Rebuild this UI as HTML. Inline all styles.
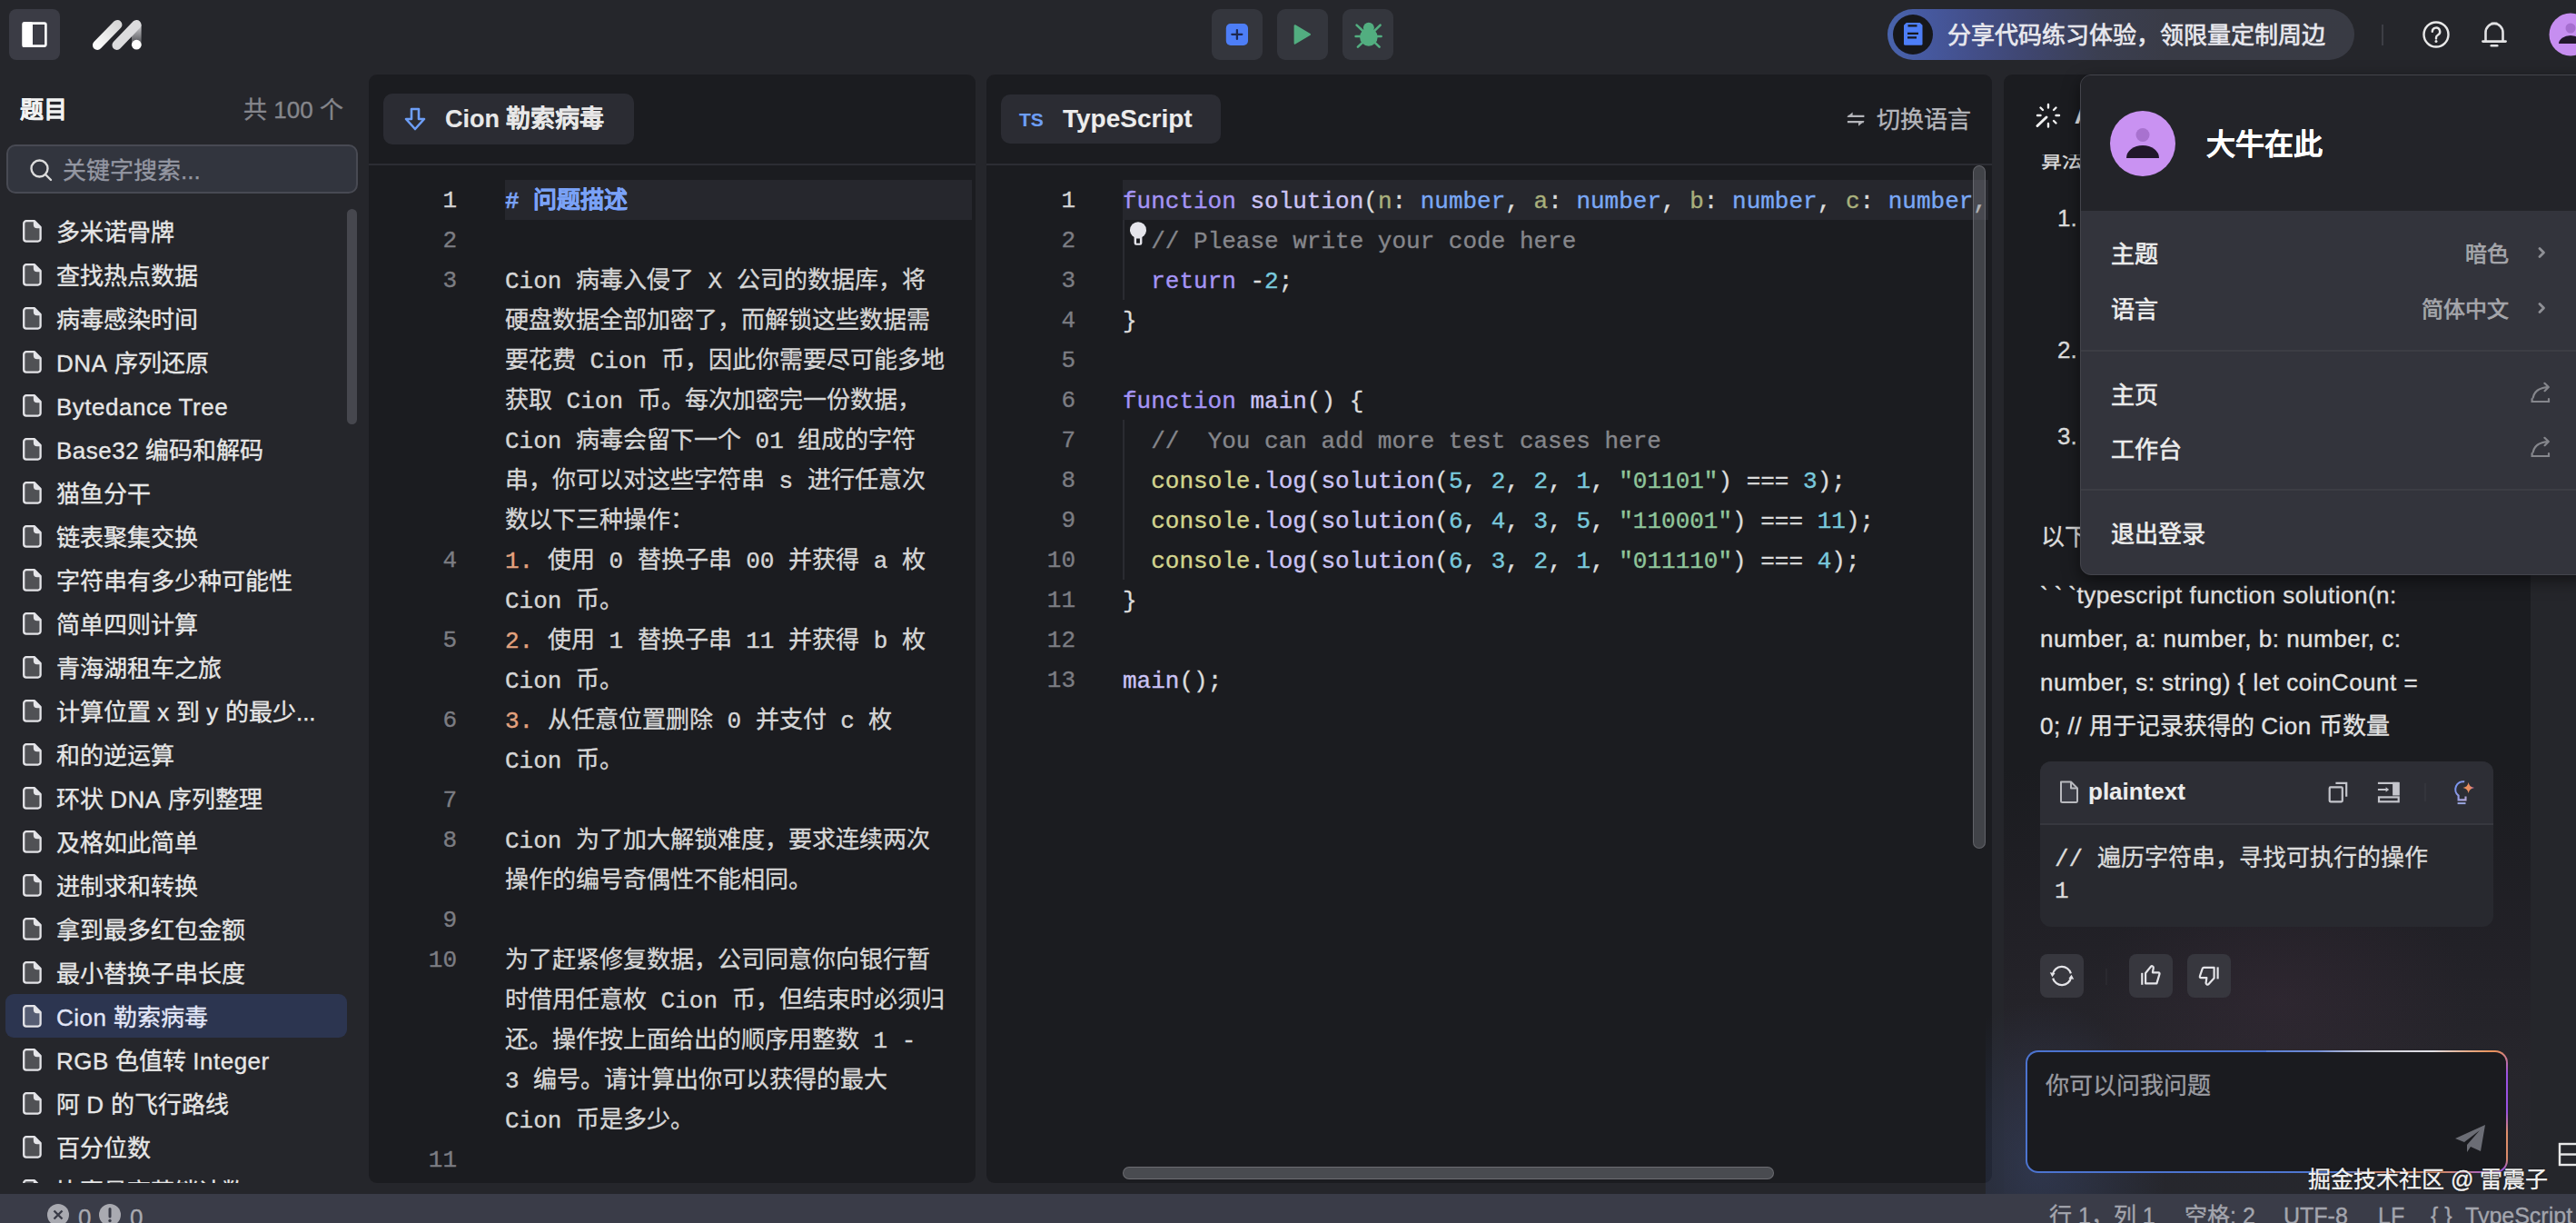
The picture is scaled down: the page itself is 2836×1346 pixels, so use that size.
<!DOCTYPE html>
<html lang="zh-CN"><head><meta charset="utf-8"><title>MarsCode</title>
<style>
html,body{margin:0;padding:0;width:2836px;height:1346px;overflow:hidden;background:#25262b}
.b{position:absolute}
.t{position:absolute;white-space:pre;-webkit-text-stroke:0.35px currentColor}
svg.b{overflow:visible}
</style></head><body>
<div class="b" style="left:0px;top:0px;width:2836px;height:1346px;background:#25262b"></div>
<div class="b" style="left:10px;top:10px;width:56px;height:56px;background:#3b3c45;border-radius:8px"></div>
<svg class="b" style="left:10px;top:10px" width="56" height="56" viewBox="0 0 56 56">
<rect x="15.8" y="15.6" width="24.6" height="25" rx="1.5" fill="none" stroke="#ffffff" stroke-width="2.6"/>
<rect x="14.5" y="14.3" width="11.5" height="27.6" rx="1.5" fill="#ffffff"/></svg>
<svg class="b" style="left:90px;top:10px" width="80" height="60" viewBox="90 10 80 60">
<defs><linearGradient id="lg1" x1="0" y1="1" x2="1" y2="0"><stop offset="0" stop-color="#fafafa"/><stop offset="1" stop-color="#d8d8d8"/></linearGradient>
<linearGradient id="lg2" x1="0" y1="0" x2="0" y2="1"><stop offset="0" stop-color="#cfcfd2"/><stop offset="1" stop-color="#4a4b50"/></linearGradient></defs>
<line x1="107.2" y1="49.7" x2="129.2" y2="27.2" stroke="url(#lg1)" stroke-width="10.5" stroke-linecap="round"/>
<path d="M145 27.2 L155.6 27.2 L155.6 49 L145 49 Z" fill="url(#lg2)"/>
<line x1="128.7" y1="49.7" x2="150.3" y2="27.2" stroke="#dcdcde" stroke-width="10.5" stroke-linecap="round"/>
<circle cx="150.3" cy="49.2" r="5.4" fill="#ffffff"/></svg>
<div class="b" style="left:1334px;top:10px;width:56px;height:56px;background:#34363d;border-radius:9px"></div>
<div class="b" style="left:1406px;top:10px;width:56px;height:56px;background:#34363d;border-radius:9px"></div>
<div class="b" style="left:1478px;top:10px;width:56px;height:56px;background:#34363d;border-radius:9px"></div>
<svg class="b" style="left:1334px;top:10px" width="55" height="55" viewBox="0 0 55 55">
<rect x="15.8" y="16.1" width="24.2" height="23.8" rx="5" fill="#4d7ef7"/>
<path d="M27.9 23.1 V32.9 M22.3 27.8 H33.3" stroke="#1d2850" stroke-width="2.3" stroke-linecap="round"/></svg>
<svg class="b" style="left:1406px;top:10px" width="55" height="55" viewBox="0 0 55 55">
<path d="M19.6 18.2 L36 27.8 L19.6 37.7 Z" fill="#52ae80" stroke="#52ae80" stroke-width="2" stroke-linejoin="round"/></svg>
<svg class="b" style="left:1478px;top:10px" width="55" height="55" viewBox="0 0 55 55">
<g stroke="#52ae80" stroke-width="2.6" stroke-linecap="round" fill="none">
<path d="M15.6 17.6 L21.9 23.5"/><path d="M41.6 17.6 L35.6 23.5"/>
<path d="M14.6 30 L19.8 30"/><path d="M42.6 30 L37.6 30"/>
<path d="M16.9 41.6 L22.3 36.6"/><path d="M40.6 41.6 L35.4 36.6"/></g>
<ellipse cx="28.85" cy="20.6" rx="6" ry="5.9" fill="#52ae80"/>
<ellipse cx="28.85" cy="30.8" rx="9.8" ry="10" fill="#52ae80"/></svg>
<div class="b" style="left:2078px;top:10px;width:514px;height:56px;border-radius:28px;background:linear-gradient(90deg,#4964ad 0%,#4659a0 8%,#434f8a 18%,#3f4670 30%,#3b3f52 45%,#393b46 60%,#393b44 100%)"></div>
<div class="b" style="left:2084px;top:16px;width:44px;height:44px;border-radius:22px;background:#16171b"></div>
<svg class="b" style="left:2084px;top:16px" width="44" height="44" viewBox="0 0 44 44">
<path d="M12 11.8 l2.8 -2.8 h14.9 l2.8 2.8 v20.4 a1.5 1.5 0 0 1 -1.5 1.5 h-17.5 a1.5 1.5 0 0 1 -1.5 -1.5 z" fill="#4d7ef7"/>
<path d="M16.5 12.4 h10 M16 20.8 h12 M16 25.4 h10" stroke="#16171b" stroke-width="2.2"/></svg>
<div class="t" style="left:2144px;top:26.0px;font-size:26px;line-height:26px;color:#e8e8ee;font-weight:normal;font-family:'Liberation Sans', sans-serif;-webkit-text-stroke:0.7px currentColor;">分享代码练习体验，领限量定制周边</div>
<div class="b" style="left:2622px;top:27px;width:2px;height:23px;background:#3d3e45"></div>
<svg class="b" style="left:2664px;top:20px" width="36" height="36" viewBox="0 0 36 36">
<circle cx="18" cy="18" r="13.5" fill="none" stroke="#e8e8e8" stroke-width="2.4"/>
<path d="M13.8 14.8 a4.2 4.2 0 1 1 6.2 3.7 c-1.3 0.7 -2 1.4 -2 2.9 v1" fill="none" stroke="#e8e8e8" stroke-width="2.4" stroke-linecap="round"/>
<circle cx="18" cy="25.6" r="1.5" fill="#e8e8e8"/></svg>
<svg class="b" style="left:2728px;top:20px" width="36" height="36" viewBox="0 0 36 36">
<path d="M8.5 25.4 V15.8 A9.5 9.8 0 0 1 27.5 15.8 V25.4" fill="none" stroke="#e2e2e4" stroke-width="2.6"/>
<path d="M5.5 25.6 h25" stroke="#e2e2e4" stroke-width="2.8" stroke-linecap="round"/>
<path d="M15.5 5.6 h5" stroke="#e2e2e4" stroke-width="2.4" stroke-linecap="round"/>
<path d="M14.8 30.2 h6.4" stroke="#e2e2e4" stroke-width="2.6" stroke-linecap="round"/></svg>
<svg class="b" style="left:2806px;top:14px" width="48" height="48" viewBox="0 0 48 48">
<circle cx="24" cy="24" r="23.5" fill="#c68ef0"/>
<circle cx="24" cy="17" r="5.5" fill="#a66fd0"/>
<path d="M11 34 a13 9 0 0 1 26 0 z" fill="#22182b"/></svg>
<div class="t" style="left:22px;top:108.0px;font-size:26px;line-height:26px;color:#f2f2f2;font-weight:bold;font-family:'Liberation Sans', sans-serif;-webkit-text-stroke:0.1px currentColor;">题目</div>
<div class="t" style="left:268px;top:108.0px;font-size:26px;line-height:26px;color:#85868c;font-weight:normal;font-family:'Liberation Sans', sans-serif;">共 100 个</div>
<div class="b" style="left:7px;top:159px;width:387px;height:54px;background:#32353e;border:2px solid #484a53;border-radius:10px;box-sizing:border-box"></div>
<svg class="b" style="left:30px;top:172px" width="30" height="30" viewBox="0 0 30 30">
<circle cx="13.5" cy="13.5" r="9" fill="none" stroke="#dcdcdc" stroke-width="2.4"/>
<path d="M20.5 20.5 L26 26" stroke="#dcdcdc" stroke-width="2.4" stroke-linecap="round"/></svg>
<div class="t" style="left:69px;top:174.5px;font-size:26px;line-height:26px;color:#9497a2;font-weight:normal;font-family:'Liberation Sans', sans-serif;">关键字搜索...</div>
<div class="b" style="left:0;top:222px;width:400px;height:1080px;overflow:hidden">
<svg class="b" style="left:22px;top:18px" width="28" height="28" viewBox="0 0 28 28">
<path d="M7 3.2 h9 l6.6 6.8 v12.8 a2.8 2.8 0 0 1 -2.8 2.8 h-12.8 a2.8 2.8 0 0 1 -2.8 -2.8 v-16.8 a2.8 2.8 0 0 1 2.8 -2.8 z" fill="rgba(255,255,255,0.2)" stroke="#e4e4e8" stroke-width="2.3" stroke-linejoin="round"/>
<path d="M16 3.2 v4 a2.8 2.8 0 0 0 2.8 2.8 h3.8" fill="#e4e4e8" stroke="#e4e4e8" stroke-width="2.3" stroke-linejoin="round"/></svg>
<div class="t" style="left:62px;top:20.5px;font-size:26px;line-height:26px;color:#e6e6e6;font-family:'Liberation Sans', sans-serif">多米诺骨牌</div>
<svg class="b" style="left:22px;top:66px" width="28" height="28" viewBox="0 0 28 28">
<path d="M7 3.2 h9 l6.6 6.8 v12.8 a2.8 2.8 0 0 1 -2.8 2.8 h-12.8 a2.8 2.8 0 0 1 -2.8 -2.8 v-16.8 a2.8 2.8 0 0 1 2.8 -2.8 z" fill="rgba(255,255,255,0.2)" stroke="#e4e4e8" stroke-width="2.3" stroke-linejoin="round"/>
<path d="M16 3.2 v4 a2.8 2.8 0 0 0 2.8 2.8 h3.8" fill="#e4e4e8" stroke="#e4e4e8" stroke-width="2.3" stroke-linejoin="round"/></svg>
<div class="t" style="left:62px;top:68.5px;font-size:26px;line-height:26px;color:#e6e6e6;font-family:'Liberation Sans', sans-serif">查找热点数据</div>
<svg class="b" style="left:22px;top:114px" width="28" height="28" viewBox="0 0 28 28">
<path d="M7 3.2 h9 l6.6 6.8 v12.8 a2.8 2.8 0 0 1 -2.8 2.8 h-12.8 a2.8 2.8 0 0 1 -2.8 -2.8 v-16.8 a2.8 2.8 0 0 1 2.8 -2.8 z" fill="rgba(255,255,255,0.2)" stroke="#e4e4e8" stroke-width="2.3" stroke-linejoin="round"/>
<path d="M16 3.2 v4 a2.8 2.8 0 0 0 2.8 2.8 h3.8" fill="#e4e4e8" stroke="#e4e4e8" stroke-width="2.3" stroke-linejoin="round"/></svg>
<div class="t" style="left:62px;top:116.5px;font-size:26px;line-height:26px;color:#e6e6e6;font-family:'Liberation Sans', sans-serif">病毒感染时间</div>
<svg class="b" style="left:22px;top:162px" width="28" height="28" viewBox="0 0 28 28">
<path d="M7 3.2 h9 l6.6 6.8 v12.8 a2.8 2.8 0 0 1 -2.8 2.8 h-12.8 a2.8 2.8 0 0 1 -2.8 -2.8 v-16.8 a2.8 2.8 0 0 1 2.8 -2.8 z" fill="rgba(255,255,255,0.2)" stroke="#e4e4e8" stroke-width="2.3" stroke-linejoin="round"/>
<path d="M16 3.2 v4 a2.8 2.8 0 0 0 2.8 2.8 h3.8" fill="#e4e4e8" stroke="#e4e4e8" stroke-width="2.3" stroke-linejoin="round"/></svg>
<div class="t" style="left:62px;top:164.5px;font-size:26px;line-height:26px;color:#e6e6e6;font-family:'Liberation Sans', sans-serif"><span style="letter-spacing:0.5px">DNA</span> 序列还原</div>
<svg class="b" style="left:22px;top:210px" width="28" height="28" viewBox="0 0 28 28">
<path d="M7 3.2 h9 l6.6 6.8 v12.8 a2.8 2.8 0 0 1 -2.8 2.8 h-12.8 a2.8 2.8 0 0 1 -2.8 -2.8 v-16.8 a2.8 2.8 0 0 1 2.8 -2.8 z" fill="rgba(255,255,255,0.2)" stroke="#e4e4e8" stroke-width="2.3" stroke-linejoin="round"/>
<path d="M16 3.2 v4 a2.8 2.8 0 0 0 2.8 2.8 h3.8" fill="#e4e4e8" stroke="#e4e4e8" stroke-width="2.3" stroke-linejoin="round"/></svg>
<div class="t" style="left:62px;top:212.5px;font-size:26px;line-height:26px;color:#e6e6e6;font-family:'Liberation Sans', sans-serif"><span style="letter-spacing:0.5px">Bytedance Tree</span></div>
<svg class="b" style="left:22px;top:258px" width="28" height="28" viewBox="0 0 28 28">
<path d="M7 3.2 h9 l6.6 6.8 v12.8 a2.8 2.8 0 0 1 -2.8 2.8 h-12.8 a2.8 2.8 0 0 1 -2.8 -2.8 v-16.8 a2.8 2.8 0 0 1 2.8 -2.8 z" fill="rgba(255,255,255,0.2)" stroke="#e4e4e8" stroke-width="2.3" stroke-linejoin="round"/>
<path d="M16 3.2 v4 a2.8 2.8 0 0 0 2.8 2.8 h3.8" fill="#e4e4e8" stroke="#e4e4e8" stroke-width="2.3" stroke-linejoin="round"/></svg>
<div class="t" style="left:62px;top:260.5px;font-size:26px;line-height:26px;color:#e6e6e6;font-family:'Liberation Sans', sans-serif"><span style="letter-spacing:0.5px">Base32</span> 编码和解码</div>
<svg class="b" style="left:22px;top:306px" width="28" height="28" viewBox="0 0 28 28">
<path d="M7 3.2 h9 l6.6 6.8 v12.8 a2.8 2.8 0 0 1 -2.8 2.8 h-12.8 a2.8 2.8 0 0 1 -2.8 -2.8 v-16.8 a2.8 2.8 0 0 1 2.8 -2.8 z" fill="rgba(255,255,255,0.2)" stroke="#e4e4e8" stroke-width="2.3" stroke-linejoin="round"/>
<path d="M16 3.2 v4 a2.8 2.8 0 0 0 2.8 2.8 h3.8" fill="#e4e4e8" stroke="#e4e4e8" stroke-width="2.3" stroke-linejoin="round"/></svg>
<div class="t" style="left:62px;top:308.5px;font-size:26px;line-height:26px;color:#e6e6e6;font-family:'Liberation Sans', sans-serif">猫鱼分干</div>
<svg class="b" style="left:22px;top:354px" width="28" height="28" viewBox="0 0 28 28">
<path d="M7 3.2 h9 l6.6 6.8 v12.8 a2.8 2.8 0 0 1 -2.8 2.8 h-12.8 a2.8 2.8 0 0 1 -2.8 -2.8 v-16.8 a2.8 2.8 0 0 1 2.8 -2.8 z" fill="rgba(255,255,255,0.2)" stroke="#e4e4e8" stroke-width="2.3" stroke-linejoin="round"/>
<path d="M16 3.2 v4 a2.8 2.8 0 0 0 2.8 2.8 h3.8" fill="#e4e4e8" stroke="#e4e4e8" stroke-width="2.3" stroke-linejoin="round"/></svg>
<div class="t" style="left:62px;top:356.5px;font-size:26px;line-height:26px;color:#e6e6e6;font-family:'Liberation Sans', sans-serif">链表聚集交换</div>
<svg class="b" style="left:22px;top:402px" width="28" height="28" viewBox="0 0 28 28">
<path d="M7 3.2 h9 l6.6 6.8 v12.8 a2.8 2.8 0 0 1 -2.8 2.8 h-12.8 a2.8 2.8 0 0 1 -2.8 -2.8 v-16.8 a2.8 2.8 0 0 1 2.8 -2.8 z" fill="rgba(255,255,255,0.2)" stroke="#e4e4e8" stroke-width="2.3" stroke-linejoin="round"/>
<path d="M16 3.2 v4 a2.8 2.8 0 0 0 2.8 2.8 h3.8" fill="#e4e4e8" stroke="#e4e4e8" stroke-width="2.3" stroke-linejoin="round"/></svg>
<div class="t" style="left:62px;top:404.5px;font-size:26px;line-height:26px;color:#e6e6e6;font-family:'Liberation Sans', sans-serif">字符串有多少种可能性</div>
<svg class="b" style="left:22px;top:450px" width="28" height="28" viewBox="0 0 28 28">
<path d="M7 3.2 h9 l6.6 6.8 v12.8 a2.8 2.8 0 0 1 -2.8 2.8 h-12.8 a2.8 2.8 0 0 1 -2.8 -2.8 v-16.8 a2.8 2.8 0 0 1 2.8 -2.8 z" fill="rgba(255,255,255,0.2)" stroke="#e4e4e8" stroke-width="2.3" stroke-linejoin="round"/>
<path d="M16 3.2 v4 a2.8 2.8 0 0 0 2.8 2.8 h3.8" fill="#e4e4e8" stroke="#e4e4e8" stroke-width="2.3" stroke-linejoin="round"/></svg>
<div class="t" style="left:62px;top:452.5px;font-size:26px;line-height:26px;color:#e6e6e6;font-family:'Liberation Sans', sans-serif">简单四则计算</div>
<svg class="b" style="left:22px;top:498px" width="28" height="28" viewBox="0 0 28 28">
<path d="M7 3.2 h9 l6.6 6.8 v12.8 a2.8 2.8 0 0 1 -2.8 2.8 h-12.8 a2.8 2.8 0 0 1 -2.8 -2.8 v-16.8 a2.8 2.8 0 0 1 2.8 -2.8 z" fill="rgba(255,255,255,0.2)" stroke="#e4e4e8" stroke-width="2.3" stroke-linejoin="round"/>
<path d="M16 3.2 v4 a2.8 2.8 0 0 0 2.8 2.8 h3.8" fill="#e4e4e8" stroke="#e4e4e8" stroke-width="2.3" stroke-linejoin="round"/></svg>
<div class="t" style="left:62px;top:500.5px;font-size:26px;line-height:26px;color:#e6e6e6;font-family:'Liberation Sans', sans-serif">青海湖租车之旅</div>
<svg class="b" style="left:22px;top:546px" width="28" height="28" viewBox="0 0 28 28">
<path d="M7 3.2 h9 l6.6 6.8 v12.8 a2.8 2.8 0 0 1 -2.8 2.8 h-12.8 a2.8 2.8 0 0 1 -2.8 -2.8 v-16.8 a2.8 2.8 0 0 1 2.8 -2.8 z" fill="rgba(255,255,255,0.2)" stroke="#e4e4e8" stroke-width="2.3" stroke-linejoin="round"/>
<path d="M16 3.2 v4 a2.8 2.8 0 0 0 2.8 2.8 h3.8" fill="#e4e4e8" stroke="#e4e4e8" stroke-width="2.3" stroke-linejoin="round"/></svg>
<div class="t" style="left:62px;top:548.5px;font-size:26px;line-height:26px;color:#e6e6e6;font-family:'Liberation Sans', sans-serif">计算位置 <span style="letter-spacing:0.5px">x</span> 到 <span style="letter-spacing:0.5px">y</span> 的最少...</div>
<svg class="b" style="left:22px;top:594px" width="28" height="28" viewBox="0 0 28 28">
<path d="M7 3.2 h9 l6.6 6.8 v12.8 a2.8 2.8 0 0 1 -2.8 2.8 h-12.8 a2.8 2.8 0 0 1 -2.8 -2.8 v-16.8 a2.8 2.8 0 0 1 2.8 -2.8 z" fill="rgba(255,255,255,0.2)" stroke="#e4e4e8" stroke-width="2.3" stroke-linejoin="round"/>
<path d="M16 3.2 v4 a2.8 2.8 0 0 0 2.8 2.8 h3.8" fill="#e4e4e8" stroke="#e4e4e8" stroke-width="2.3" stroke-linejoin="round"/></svg>
<div class="t" style="left:62px;top:596.5px;font-size:26px;line-height:26px;color:#e6e6e6;font-family:'Liberation Sans', sans-serif">和的逆运算</div>
<svg class="b" style="left:22px;top:642px" width="28" height="28" viewBox="0 0 28 28">
<path d="M7 3.2 h9 l6.6 6.8 v12.8 a2.8 2.8 0 0 1 -2.8 2.8 h-12.8 a2.8 2.8 0 0 1 -2.8 -2.8 v-16.8 a2.8 2.8 0 0 1 2.8 -2.8 z" fill="rgba(255,255,255,0.2)" stroke="#e4e4e8" stroke-width="2.3" stroke-linejoin="round"/>
<path d="M16 3.2 v4 a2.8 2.8 0 0 0 2.8 2.8 h3.8" fill="#e4e4e8" stroke="#e4e4e8" stroke-width="2.3" stroke-linejoin="round"/></svg>
<div class="t" style="left:62px;top:644.5px;font-size:26px;line-height:26px;color:#e6e6e6;font-family:'Liberation Sans', sans-serif">环状 <span style="letter-spacing:0.5px">DNA</span> 序列整理</div>
<svg class="b" style="left:22px;top:690px" width="28" height="28" viewBox="0 0 28 28">
<path d="M7 3.2 h9 l6.6 6.8 v12.8 a2.8 2.8 0 0 1 -2.8 2.8 h-12.8 a2.8 2.8 0 0 1 -2.8 -2.8 v-16.8 a2.8 2.8 0 0 1 2.8 -2.8 z" fill="rgba(255,255,255,0.2)" stroke="#e4e4e8" stroke-width="2.3" stroke-linejoin="round"/>
<path d="M16 3.2 v4 a2.8 2.8 0 0 0 2.8 2.8 h3.8" fill="#e4e4e8" stroke="#e4e4e8" stroke-width="2.3" stroke-linejoin="round"/></svg>
<div class="t" style="left:62px;top:692.5px;font-size:26px;line-height:26px;color:#e6e6e6;font-family:'Liberation Sans', sans-serif">及格如此简单</div>
<svg class="b" style="left:22px;top:738px" width="28" height="28" viewBox="0 0 28 28">
<path d="M7 3.2 h9 l6.6 6.8 v12.8 a2.8 2.8 0 0 1 -2.8 2.8 h-12.8 a2.8 2.8 0 0 1 -2.8 -2.8 v-16.8 a2.8 2.8 0 0 1 2.8 -2.8 z" fill="rgba(255,255,255,0.2)" stroke="#e4e4e8" stroke-width="2.3" stroke-linejoin="round"/>
<path d="M16 3.2 v4 a2.8 2.8 0 0 0 2.8 2.8 h3.8" fill="#e4e4e8" stroke="#e4e4e8" stroke-width="2.3" stroke-linejoin="round"/></svg>
<div class="t" style="left:62px;top:740.5px;font-size:26px;line-height:26px;color:#e6e6e6;font-family:'Liberation Sans', sans-serif">进制求和转换</div>
<svg class="b" style="left:22px;top:786px" width="28" height="28" viewBox="0 0 28 28">
<path d="M7 3.2 h9 l6.6 6.8 v12.8 a2.8 2.8 0 0 1 -2.8 2.8 h-12.8 a2.8 2.8 0 0 1 -2.8 -2.8 v-16.8 a2.8 2.8 0 0 1 2.8 -2.8 z" fill="rgba(255,255,255,0.2)" stroke="#e4e4e8" stroke-width="2.3" stroke-linejoin="round"/>
<path d="M16 3.2 v4 a2.8 2.8 0 0 0 2.8 2.8 h3.8" fill="#e4e4e8" stroke="#e4e4e8" stroke-width="2.3" stroke-linejoin="round"/></svg>
<div class="t" style="left:62px;top:788.5px;font-size:26px;line-height:26px;color:#e6e6e6;font-family:'Liberation Sans', sans-serif">拿到最多红包金额</div>
<svg class="b" style="left:22px;top:834px" width="28" height="28" viewBox="0 0 28 28">
<path d="M7 3.2 h9 l6.6 6.8 v12.8 a2.8 2.8 0 0 1 -2.8 2.8 h-12.8 a2.8 2.8 0 0 1 -2.8 -2.8 v-16.8 a2.8 2.8 0 0 1 2.8 -2.8 z" fill="rgba(255,255,255,0.2)" stroke="#e4e4e8" stroke-width="2.3" stroke-linejoin="round"/>
<path d="M16 3.2 v4 a2.8 2.8 0 0 0 2.8 2.8 h3.8" fill="#e4e4e8" stroke="#e4e4e8" stroke-width="2.3" stroke-linejoin="round"/></svg>
<div class="t" style="left:62px;top:836.5px;font-size:26px;line-height:26px;color:#e6e6e6;font-family:'Liberation Sans', sans-serif">最小替换子串长度</div>
<div class="b" style="left:6px;top:872px;width:376px;height:48px;background:#2c3550;border-radius:9px"></div>
<svg class="b" style="left:22px;top:882px" width="28" height="28" viewBox="0 0 28 28">
<path d="M7 3.2 h9 l6.6 6.8 v12.8 a2.8 2.8 0 0 1 -2.8 2.8 h-12.8 a2.8 2.8 0 0 1 -2.8 -2.8 v-16.8 a2.8 2.8 0 0 1 2.8 -2.8 z" fill="rgba(255,255,255,0.2)" stroke="#e4e4e8" stroke-width="2.3" stroke-linejoin="round"/>
<path d="M16 3.2 v4 a2.8 2.8 0 0 0 2.8 2.8 h3.8" fill="#e4e4e8" stroke="#e4e4e8" stroke-width="2.3" stroke-linejoin="round"/></svg>
<div class="t" style="left:62px;top:884.5px;font-size:26px;line-height:26px;color:#e2e6f8;font-family:'Liberation Sans', sans-serif"><span style="letter-spacing:0.5px">Cion</span> 勒索病毒</div>
<svg class="b" style="left:22px;top:930px" width="28" height="28" viewBox="0 0 28 28">
<path d="M7 3.2 h9 l6.6 6.8 v12.8 a2.8 2.8 0 0 1 -2.8 2.8 h-12.8 a2.8 2.8 0 0 1 -2.8 -2.8 v-16.8 a2.8 2.8 0 0 1 2.8 -2.8 z" fill="rgba(255,255,255,0.2)" stroke="#e4e4e8" stroke-width="2.3" stroke-linejoin="round"/>
<path d="M16 3.2 v4 a2.8 2.8 0 0 0 2.8 2.8 h3.8" fill="#e4e4e8" stroke="#e4e4e8" stroke-width="2.3" stroke-linejoin="round"/></svg>
<div class="t" style="left:62px;top:932.5px;font-size:26px;line-height:26px;color:#e6e6e6;font-family:'Liberation Sans', sans-serif"><span style="letter-spacing:0.5px">RGB</span> 色值转 <span style="letter-spacing:0.5px">Integer</span></div>
<svg class="b" style="left:22px;top:978px" width="28" height="28" viewBox="0 0 28 28">
<path d="M7 3.2 h9 l6.6 6.8 v12.8 a2.8 2.8 0 0 1 -2.8 2.8 h-12.8 a2.8 2.8 0 0 1 -2.8 -2.8 v-16.8 a2.8 2.8 0 0 1 2.8 -2.8 z" fill="rgba(255,255,255,0.2)" stroke="#e4e4e8" stroke-width="2.3" stroke-linejoin="round"/>
<path d="M16 3.2 v4 a2.8 2.8 0 0 0 2.8 2.8 h3.8" fill="#e4e4e8" stroke="#e4e4e8" stroke-width="2.3" stroke-linejoin="round"/></svg>
<div class="t" style="left:62px;top:980.5px;font-size:26px;line-height:26px;color:#e6e6e6;font-family:'Liberation Sans', sans-serif">阿 <span style="letter-spacing:0.5px">D</span> 的飞行路线</div>
<svg class="b" style="left:22px;top:1026px" width="28" height="28" viewBox="0 0 28 28">
<path d="M7 3.2 h9 l6.6 6.8 v12.8 a2.8 2.8 0 0 1 -2.8 2.8 h-12.8 a2.8 2.8 0 0 1 -2.8 -2.8 v-16.8 a2.8 2.8 0 0 1 2.8 -2.8 z" fill="rgba(255,255,255,0.2)" stroke="#e4e4e8" stroke-width="2.3" stroke-linejoin="round"/>
<path d="M16 3.2 v4 a2.8 2.8 0 0 0 2.8 2.8 h3.8" fill="#e4e4e8" stroke="#e4e4e8" stroke-width="2.3" stroke-linejoin="round"/></svg>
<div class="t" style="left:62px;top:1028.5px;font-size:26px;line-height:26px;color:#e6e6e6;font-family:'Liberation Sans', sans-serif">百分位数</div>
<svg class="b" style="left:22px;top:1074px" width="28" height="28" viewBox="0 0 28 28">
<path d="M7 3.2 h9 l6.6 6.8 v12.8 a2.8 2.8 0 0 1 -2.8 2.8 h-12.8 a2.8 2.8 0 0 1 -2.8 -2.8 v-16.8 a2.8 2.8 0 0 1 2.8 -2.8 z" fill="rgba(255,255,255,0.2)" stroke="#e4e4e8" stroke-width="2.3" stroke-linejoin="round"/>
<path d="M16 3.2 v4 a2.8 2.8 0 0 0 2.8 2.8 h3.8" fill="#e4e4e8" stroke="#e4e4e8" stroke-width="2.3" stroke-linejoin="round"/></svg>
<div class="t" style="left:62px;top:1076.5px;font-size:26px;line-height:26px;color:#e6e6e6;font-family:'Liberation Sans', sans-serif">比赛最高营销计数</div>
</div>
<div class="b" style="left:382px;top:230px;width:11px;height:237px;background:#46474e;border-radius:6px"></div>
<div class="b" style="left:406px;top:82px;width:668px;height:1220px;background:#1b1c20;border-radius:9px"></div>
<div class="b" style="left:406px;top:180px;width:668px;height:2px;background:#2c2d33"></div>
<div class="b" style="left:422px;top:103px;width:276px;height:56px;background:#2b2c33;border-radius:10px"></div>
<svg class="b" style="left:440px;top:116px" width="34" height="30" viewBox="0 0 34 30">
<path d="M13 4 h8 v11 h6 L17 26 L7 15 h6 z" fill="none" stroke="#6d9ef6" stroke-width="2.6" stroke-linejoin="round"/></svg>
<div class="t" style="left:490px;top:117.5px;font-size:27px;line-height:27px;color:#e8e8e8;font-weight:bold;font-family:'Liberation Sans', sans-serif;-webkit-text-stroke:0.1px currentColor;">Cion 勒索病毒</div>
<div class="b" style="left:556px;top:198px;width:514px;height:44px;background:#26272d"></div>
<div class="b" style="left:406px;top:182px;width:668px;height:1120px;overflow:hidden">
<div class="t" style="right:571px;top:25.5px;font-size:26px;line-height:26px;color:#d4d4d4;font-family:'Liberation Mono', monospace;text-align:right">1</div>
<div class="t ed" style="left:150px;top:27px;font-size:26px;line-height:26px;color:#d6d6d6;font-family:'Liberation Mono', monospace"><span style="color:#7aa2f7;font-weight:bold"># 问题描述</span></div>
<div class="t" style="right:571px;top:69.5px;font-size:26px;line-height:26px;color:#7c7d83;font-family:'Liberation Mono', monospace;text-align:right">2</div>
<div class="t" style="right:571px;top:113.5px;font-size:26px;line-height:26px;color:#7c7d83;font-family:'Liberation Mono', monospace;text-align:right">3</div>
<div class="t ed" style="left:150px;top:115px;font-size:26px;line-height:26px;color:#d6d6d6;font-family:'Liberation Mono', monospace">Cion 病毒入侵了 X 公司的数据库，将</div>
<div class="t ed" style="left:150px;top:159px;font-size:26px;line-height:26px;color:#d6d6d6;font-family:'Liberation Mono', monospace">硬盘数据全部加密了，而解锁这些数据需</div>
<div class="t ed" style="left:150px;top:203px;font-size:26px;line-height:26px;color:#d6d6d6;font-family:'Liberation Mono', monospace">要花费 Cion 币，因此你需要尽可能多地</div>
<div class="t ed" style="left:150px;top:247px;font-size:26px;line-height:26px;color:#d6d6d6;font-family:'Liberation Mono', monospace">获取 Cion 币。每次加密完一份数据，</div>
<div class="t ed" style="left:150px;top:291px;font-size:26px;line-height:26px;color:#d6d6d6;font-family:'Liberation Mono', monospace">Cion 病毒会留下一个 01 组成的字符</div>
<div class="t ed" style="left:150px;top:335px;font-size:26px;line-height:26px;color:#d6d6d6;font-family:'Liberation Mono', monospace">串，你可以对这些字符串 s 进行任意次</div>
<div class="t ed" style="left:150px;top:379px;font-size:26px;line-height:26px;color:#d6d6d6;font-family:'Liberation Mono', monospace">数以下三种操作：</div>
<div class="t" style="right:571px;top:421.5px;font-size:26px;line-height:26px;color:#7c7d83;font-family:'Liberation Mono', monospace;text-align:right">4</div>
<div class="t ed" style="left:150px;top:423px;font-size:26px;line-height:26px;color:#d6d6d6;font-family:'Liberation Mono', monospace"><span style="color:#e3a27e">1.</span> 使用 0 替换子串 00 并获得 a 枚</div>
<div class="t ed" style="left:150px;top:467px;font-size:26px;line-height:26px;color:#d6d6d6;font-family:'Liberation Mono', monospace">Cion 币。</div>
<div class="t" style="right:571px;top:509.5px;font-size:26px;line-height:26px;color:#7c7d83;font-family:'Liberation Mono', monospace;text-align:right">5</div>
<div class="t ed" style="left:150px;top:511px;font-size:26px;line-height:26px;color:#d6d6d6;font-family:'Liberation Mono', monospace"><span style="color:#e3a27e">2.</span> 使用 1 替换子串 11 并获得 b 枚</div>
<div class="t ed" style="left:150px;top:555px;font-size:26px;line-height:26px;color:#d6d6d6;font-family:'Liberation Mono', monospace">Cion 币。</div>
<div class="t" style="right:571px;top:597.5px;font-size:26px;line-height:26px;color:#7c7d83;font-family:'Liberation Mono', monospace;text-align:right">6</div>
<div class="t ed" style="left:150px;top:599px;font-size:26px;line-height:26px;color:#d6d6d6;font-family:'Liberation Mono', monospace"><span style="color:#e3a27e">3.</span> 从任意位置删除 0 并支付 c 枚</div>
<div class="t ed" style="left:150px;top:643px;font-size:26px;line-height:26px;color:#d6d6d6;font-family:'Liberation Mono', monospace">Cion 币。</div>
<div class="t" style="right:571px;top:685.5px;font-size:26px;line-height:26px;color:#7c7d83;font-family:'Liberation Mono', monospace;text-align:right">7</div>
<div class="t" style="right:571px;top:729.5px;font-size:26px;line-height:26px;color:#7c7d83;font-family:'Liberation Mono', monospace;text-align:right">8</div>
<div class="t ed" style="left:150px;top:731px;font-size:26px;line-height:26px;color:#d6d6d6;font-family:'Liberation Mono', monospace">Cion 为了加大解锁难度，要求连续两次</div>
<div class="t ed" style="left:150px;top:775px;font-size:26px;line-height:26px;color:#d6d6d6;font-family:'Liberation Mono', monospace">操作的编号奇偶性不能相同。</div>
<div class="t" style="right:571px;top:817.5px;font-size:26px;line-height:26px;color:#7c7d83;font-family:'Liberation Mono', monospace;text-align:right">9</div>
<div class="t" style="right:571px;top:861.5px;font-size:26px;line-height:26px;color:#7c7d83;font-family:'Liberation Mono', monospace;text-align:right">10</div>
<div class="t ed" style="left:150px;top:863px;font-size:26px;line-height:26px;color:#d6d6d6;font-family:'Liberation Mono', monospace">为了赶紧修复数据，公司同意你向银行暂</div>
<div class="t ed" style="left:150px;top:907px;font-size:26px;line-height:26px;color:#d6d6d6;font-family:'Liberation Mono', monospace">时借用任意枚 Cion 币，但结束时必须归</div>
<div class="t ed" style="left:150px;top:951px;font-size:26px;line-height:26px;color:#d6d6d6;font-family:'Liberation Mono', monospace">还。操作按上面给出的顺序用整数 1 -</div>
<div class="t ed" style="left:150px;top:995px;font-size:26px;line-height:26px;color:#d6d6d6;font-family:'Liberation Mono', monospace">3 编号。请计算出你可以获得的最大</div>
<div class="t ed" style="left:150px;top:1039px;font-size:26px;line-height:26px;color:#d6d6d6;font-family:'Liberation Mono', monospace">Cion 币是多少。</div>
<div class="t" style="right:571px;top:1081.5px;font-size:26px;line-height:26px;color:#7c7d83;font-family:'Liberation Mono', monospace;text-align:right">11</div>
</div>
<div class="b" style="left:1086px;top:82px;width:1107px;height:1220px;background:#1b1c20;border-radius:9px"></div>
<div class="b" style="left:1086px;top:180px;width:1107px;height:2px;background:#2c2d33"></div>
<div class="b" style="left:1102px;top:104px;width:242px;height:54px;background:#2b2c33;border-radius:10px"></div>
<div class="t" style="left:1122px;top:120.5px;font-size:21px;line-height:21px;color:#6d9ef6;font-weight:bold;font-family:'Liberation Sans', sans-serif;-webkit-text-stroke:0.1px currentColor;">TS</div>
<div class="t" style="left:1170px;top:117.0px;font-size:28px;line-height:28px;color:#ececec;font-weight:bold;font-family:'Liberation Sans', sans-serif;-webkit-text-stroke:0.1px currentColor;">TypeScript</div>
<svg class="b" style="left:2028px;top:118px" width="30" height="28" viewBox="0 0 30 28">
<path d="M6.5 9.9 H24.4 M5.9 16.2 H23.8" stroke="#b4b5ba" stroke-width="2.2"/>
<path d="M5.2 11 L11.6 5.6 L11.6 11 Z M24.8 15.1 L18 20.8 L18 15.1 Z" fill="#b4b5ba"/></svg>
<div class="t" style="left:2066px;top:119.0px;font-size:26px;line-height:26px;color:#b4b5ba;font-weight:normal;font-family:'Liberation Sans', sans-serif;">切换语言</div>
<div class="b" style="left:1236px;top:198px;width:953px;height:44px;background:#26272d"></div>
<div class="b" style="left:1236px;top:242px;width:2px;height:88px;background:#2a2b31"></div>
<div class="b" style="left:1236px;top:462px;width:2px;height:176px;background:#2a2b31"></div>
<div class="b" style="left:1086px;top:182px;width:1103px;height:1120px;overflow:hidden">
<div class="t" style="right:1005px;top:25.5px;font-size:26px;line-height:26px;color:#d4d4d4;font-family:'Liberation Mono', monospace;text-align:right">1</div>
<div class="t ed" style="left:150px;top:26.5px;font-size:26px;line-height:26px;font-family:'Liberation Mono', monospace;white-space:pre"><span style="color:#a594f5">function</span> <span style="color:#cbc3f5">solution</span><span style="color:#dcdcdc">(</span><span style="color:#a9b07c">n</span><span style="color:#dcdcdc">: </span><span style="color:#7aa8f5">number</span><span style="color:#dcdcdc">, </span><span style="color:#a9b07c">a</span><span style="color:#dcdcdc">: </span><span style="color:#7aa8f5">number</span><span style="color:#dcdcdc">, </span><span style="color:#a9b07c">b</span><span style="color:#dcdcdc">: </span><span style="color:#7aa8f5">number</span><span style="color:#dcdcdc">, </span><span style="color:#a9b07c">c</span><span style="color:#dcdcdc">: </span><span style="color:#7aa8f5">number</span><span style="color:#dcdcdc">,</span></div>
<div class="t" style="right:1005px;top:69.5px;font-size:26px;line-height:26px;color:#7c7d83;font-family:'Liberation Mono', monospace;text-align:right">2</div>
<div class="t ed" style="left:150px;top:70.5px;font-size:26px;line-height:26px;font-family:'Liberation Mono', monospace;white-space:pre">  <span style="color:#85868b">// Please write your code here</span></div>
<div class="t" style="right:1005px;top:113.5px;font-size:26px;line-height:26px;color:#7c7d83;font-family:'Liberation Mono', monospace;text-align:right">3</div>
<div class="t ed" style="left:150px;top:114.5px;font-size:26px;line-height:26px;font-family:'Liberation Mono', monospace;white-space:pre">  <span style="color:#a594f5">return</span> <span style="color:#dcdcdc">-</span><span style="color:#79c9dc">2</span><span style="color:#dcdcdc">;</span></div>
<div class="t" style="right:1005px;top:157.5px;font-size:26px;line-height:26px;color:#7c7d83;font-family:'Liberation Mono', monospace;text-align:right">4</div>
<div class="t ed" style="left:150px;top:158.5px;font-size:26px;line-height:26px;font-family:'Liberation Mono', monospace;white-space:pre"><span style="color:#dcdcdc">}</span></div>
<div class="t" style="right:1005px;top:201.5px;font-size:26px;line-height:26px;color:#7c7d83;font-family:'Liberation Mono', monospace;text-align:right">5</div>
<div class="t" style="right:1005px;top:245.5px;font-size:26px;line-height:26px;color:#7c7d83;font-family:'Liberation Mono', monospace;text-align:right">6</div>
<div class="t ed" style="left:150px;top:246.5px;font-size:26px;line-height:26px;font-family:'Liberation Mono', monospace;white-space:pre"><span style="color:#a594f5">function</span> <span style="color:#cbc3f5">main</span><span style="color:#dcdcdc">() {</span></div>
<div class="t" style="right:1005px;top:289.5px;font-size:26px;line-height:26px;color:#7c7d83;font-family:'Liberation Mono', monospace;text-align:right">7</div>
<div class="t ed" style="left:150px;top:290.5px;font-size:26px;line-height:26px;font-family:'Liberation Mono', monospace;white-space:pre">  <span style="color:#85868b">//  You can add more test cases here</span></div>
<div class="t" style="right:1005px;top:333.5px;font-size:26px;line-height:26px;color:#7c7d83;font-family:'Liberation Mono', monospace;text-align:right">8</div>
<div class="t ed" style="left:150px;top:334.5px;font-size:26px;line-height:26px;font-family:'Liberation Mono', monospace;white-space:pre">  <span style="color:#d3d58f">console</span><span style="color:#dcdcdc">.</span><span style="color:#cbc3f5">log</span><span style="color:#dcdcdc">(</span><span style="color:#cbc3f5">solution</span><span style="color:#dcdcdc">(</span><span style="color:#79c9dc">5</span><span style="color:#dcdcdc">, </span><span style="color:#79c9dc">2</span><span style="color:#dcdcdc">, </span><span style="color:#79c9dc">2</span><span style="color:#dcdcdc">, </span><span style="color:#79c9dc">1</span><span style="color:#dcdcdc">, </span><span style="color:#8fc59a">"01101"</span><span style="color:#dcdcdc">) === </span><span style="color:#79c9dc">3</span><span style="color:#dcdcdc">);</span></div>
<div class="t" style="right:1005px;top:377.5px;font-size:26px;line-height:26px;color:#7c7d83;font-family:'Liberation Mono', monospace;text-align:right">9</div>
<div class="t ed" style="left:150px;top:378.5px;font-size:26px;line-height:26px;font-family:'Liberation Mono', monospace;white-space:pre">  <span style="color:#d3d58f">console</span><span style="color:#dcdcdc">.</span><span style="color:#cbc3f5">log</span><span style="color:#dcdcdc">(</span><span style="color:#cbc3f5">solution</span><span style="color:#dcdcdc">(</span><span style="color:#79c9dc">6</span><span style="color:#dcdcdc">, </span><span style="color:#79c9dc">4</span><span style="color:#dcdcdc">, </span><span style="color:#79c9dc">3</span><span style="color:#dcdcdc">, </span><span style="color:#79c9dc">5</span><span style="color:#dcdcdc">, </span><span style="color:#8fc59a">"110001"</span><span style="color:#dcdcdc">) === </span><span style="color:#79c9dc">11</span><span style="color:#dcdcdc">);</span></div>
<div class="t" style="right:1005px;top:421.5px;font-size:26px;line-height:26px;color:#7c7d83;font-family:'Liberation Mono', monospace;text-align:right">10</div>
<div class="t ed" style="left:150px;top:422.5px;font-size:26px;line-height:26px;font-family:'Liberation Mono', monospace;white-space:pre">  <span style="color:#d3d58f">console</span><span style="color:#dcdcdc">.</span><span style="color:#cbc3f5">log</span><span style="color:#dcdcdc">(</span><span style="color:#cbc3f5">solution</span><span style="color:#dcdcdc">(</span><span style="color:#79c9dc">6</span><span style="color:#dcdcdc">, </span><span style="color:#79c9dc">3</span><span style="color:#dcdcdc">, </span><span style="color:#79c9dc">2</span><span style="color:#dcdcdc">, </span><span style="color:#79c9dc">1</span><span style="color:#dcdcdc">, </span><span style="color:#8fc59a">"011110"</span><span style="color:#dcdcdc">) === </span><span style="color:#79c9dc">4</span><span style="color:#dcdcdc">);</span></div>
<div class="t" style="right:1005px;top:465.5px;font-size:26px;line-height:26px;color:#7c7d83;font-family:'Liberation Mono', monospace;text-align:right">11</div>
<div class="t ed" style="left:150px;top:466.5px;font-size:26px;line-height:26px;font-family:'Liberation Mono', monospace;white-space:pre"><span style="color:#dcdcdc">}</span></div>
<div class="t" style="right:1005px;top:509.5px;font-size:26px;line-height:26px;color:#7c7d83;font-family:'Liberation Mono', monospace;text-align:right">12</div>
<div class="t" style="right:1005px;top:553.5px;font-size:26px;line-height:26px;color:#7c7d83;font-family:'Liberation Mono', monospace;text-align:right">13</div>
<div class="t ed" style="left:150px;top:554.5px;font-size:26px;line-height:26px;font-family:'Liberation Mono', monospace;white-space:pre"><span style="color:#cbc3f5">main</span><span style="color:#dcdcdc">();</span></div>
</div>
<svg class="b" style="left:1240px;top:240px" width="26" height="32" viewBox="0 0 26 32">
<circle cx="13" cy="13.2" r="9" fill="#e4e4ea"/>
<path d="M8.6 18 h8.8 v9.5 a2.2 2.2 0 0 1 -2.2 2.2 h-4.4 a2.2 2.2 0 0 1 -2.2 -2.2 z" fill="#e4e4ea"/>
<rect x="11.1" y="22.5" width="3.8" height="5.2" fill="#16171b"/></svg>
<div class="b" style="left:2172px;top:182px;width:14px;height:752px;background:rgba(120,121,128,0.42);border:1px solid rgba(160,160,166,0.35);border-radius:7px;box-sizing:border-box"></div>
<div class="b" style="left:1236px;top:1284px;width:717px;height:14px;background:rgba(120,121,128,0.5);border:1px solid rgba(160,160,166,0.4);border-radius:7px;box-sizing:border-box"></div>
<div class="b" style="left:2206px;top:82px;width:580px;height:1232px;background:linear-gradient(180deg,#1b1c20 0%,#1b1c20 62%,#222127 78%,#27262c 90%,#26272d 100%);border-radius:9px 9px 0 0"></div>
<div class="b" style="left:2186px;top:1100px;width:200px;height:214px;background:radial-gradient(ellipse at 30% 85%,rgba(70,95,160,0.28) 0%,rgba(70,95,160,0) 70%)"></div>
<div class="b" style="left:2300px;top:950px;width:420px;height:300px;background:radial-gradient(ellipse at 50% 50%,rgba(90,55,80,0.18) 0%,rgba(90,55,80,0) 70%)"></div>
<svg class="b" style="left:2238px;top:111px" width="32" height="32" viewBox="0 0 32 32">
<g stroke="#f0f0f0" stroke-width="2.4" stroke-linecap="round">
<path d="M17 4v3.5M17 25v3.5M5 16h3.5M25.5 16h3.5M8.5 7.5l2.5 2.5M23 22l2.5 2.5M25.5 7.5l-2.5 2.5"/>
<path d="M15 18 L5 27.5" stroke-width="3"/></g></svg>
<div class="t" style="left:2284px;top:114.0px;font-size:26px;line-height:26px;color:#f0f0f0;font-weight:bold;font-family:'Liberation Sans', sans-serif;-webkit-text-stroke:0.1px currentColor;">AI 助手</div>
<div class="b" style="left:2206px;top:170px;width:200px;height:30px;overflow:hidden">
<div class="t" style="left:41px;top:-5px;font-size:23px;line-height:23px;color:#dcdcdc;font-family:'Liberation Sans', sans-serif">算法</div>
</div>
<div class="t" style="left:2265px;top:227.0px;font-size:26px;line-height:26px;color:#dcdcdc;font-weight:normal;font-family:'Liberation Sans', sans-serif;">1.</div>
<div class="t" style="left:2265px;top:372.0px;font-size:26px;line-height:26px;color:#dcdcdc;font-weight:normal;font-family:'Liberation Sans', sans-serif;">2.</div>
<div class="t" style="left:2265px;top:467.0px;font-size:26px;line-height:26px;color:#dcdcdc;font-weight:normal;font-family:'Liberation Sans', sans-serif;">3.</div>
<div class="t" style="left:2247px;top:578.0px;font-size:26px;line-height:26px;color:#dcdcdc;font-weight:normal;font-family:'Liberation Sans', sans-serif;">以下是</div>
<div class="t" style="left:2246px;top:642.0px;font-size:26px;line-height:26px;color:#e2e2e2;font-weight:normal;font-family:'Liberation Sans', sans-serif;letter-spacing:0.5px"><span style="letter-spacing:7px">``</span>`typescript function solution(n:</div>
<div class="t" style="left:2246px;top:690.0px;font-size:26px;line-height:26px;color:#e2e2e2;font-weight:normal;font-family:'Liberation Sans', sans-serif;letter-spacing:0.5px">number, a: number, b: number, c:</div>
<div class="t" style="left:2246px;top:738.0px;font-size:26px;line-height:26px;color:#e2e2e2;font-weight:normal;font-family:'Liberation Sans', sans-serif;letter-spacing:0.5px">number, s: string) { let coinCount =</div>
<div class="t" style="left:2246px;top:786.0px;font-size:26px;line-height:26px;color:#e2e2e2;font-weight:normal;font-family:'Liberation Sans', sans-serif;letter-spacing:0.5px">0; // <span style="letter-spacing:0">用于记录获得的</span> Cion <span style="letter-spacing:0">币数量</span></div>
<div class="b" style="left:2246px;top:838px;width:499px;height:182px;background:#28292f;border-radius:12px"></div>
<div class="b" style="left:2246px;top:838px;width:499px;height:69px;background:#2d2e35;border-radius:12px 12px 0 0"></div>
<div class="b" style="left:2246px;top:906px;width:499px;height:2px;background:#37383f"></div>
<svg class="b" style="left:2264px;top:857px" width="30" height="30" viewBox="0 0 30 30">
<path d="M5 3.5 h11 l7 7 v14 a1.5 1.5 0 0 1 -1.5 1.5 h-15 a1.5 1.5 0 0 1 -1.5 -1.5 z" fill="#3a3c45" stroke="#b8b9be" stroke-width="2" stroke-linejoin="round"/>
<path d="M16 3.5 v7 h7" fill="none" stroke="#b8b9be" stroke-width="2" stroke-linejoin="round"/></svg>
<div class="t" style="left:2299px;top:858.0px;font-size:26px;line-height:26px;color:#ececec;font-weight:bold;font-family:'Liberation Sans', sans-serif;-webkit-text-stroke:0.1px currentColor;">plaintext</div>
<svg class="b" style="left:2558px;top:856px" width="32" height="32" viewBox="0 0 32 32">
<rect x="6.7" y="10.4" width="14.1" height="15.9" rx="1" fill="none" stroke="#c4c5cc" stroke-width="2.2"/>
<path d="M13.4 5.9 H25.2 V20.7" fill="none" stroke="#c4c5cc" stroke-width="2.2"/></svg>
<svg class="b" style="left:2614px;top:856px" width="32" height="32" viewBox="0 0 32 32">
<path d="M3.9 5.9 H26.7" stroke="#c4c5cc" stroke-width="2.2"/>
<rect x="20.1" y="4.9" width="7.7" height="14.6" fill="#c4c5cc"/>
<rect x="5" y="21.4" width="21.7" height="4.9" fill="none" stroke="#c4c5cc" stroke-width="2.2"/>
<path d="M3.9 13 H13.5" stroke="#c4c5cc" stroke-width="2"/>
<path d="M12.6 10.2 L16.2 13 L12.6 15.8 Z" fill="#c4c5cc"/></svg>
<div class="b" style="left:2669px;top:862px;width:2px;height:20px;background:#34353c"></div>
<svg class="b" style="left:2696px;top:856px" width="32" height="32" viewBox="0 0 32 32">
<defs><linearGradient id="bulbg" x1="0" y1="0" x2="1" y2="1"><stop offset="0" stop-color="#6e90f2"/><stop offset="1" stop-color="#b4a8d8"/></linearGradient>
<linearGradient id="starg" x1="0" y1="0" x2="1" y2="0"><stop offset="0" stop-color="#ee9458"/><stop offset="0.65" stop-color="#e88a62"/><stop offset="1" stop-color="#c874c8"/></linearGradient></defs>
<path d="M17.2 4.3 A8.6 8.6 0 0 0 10.6 19.6 V24.4 H18.5 V20.5" fill="none" stroke="url(#bulbg)" stroke-width="2.1"/>
<path d="M9.6 28.1 H18.5" stroke="#9aa6e0" stroke-width="2"/>
<path d="M21.6 4.9 Q22.4 10.2 28.1 10.9 Q22.4 11.6 21.6 17 Q20.8 11.6 15.5 10.9 Q20.8 10.2 21.6 4.9 Z" fill="url(#starg)"/></svg>
<div class="t" style="left:2262px;top:933.0px;font-size:26px;line-height:26px;color:#dcdcdc;font-weight:normal;font-family:'Liberation Mono', monospace;">// 遍历字符串，寻找可执行的操作</div>
<div class="t" style="left:2262px;top:968.0px;font-size:26px;line-height:26px;color:#dcdcdc;font-weight:normal;font-family:'Liberation Mono', monospace;">1</div>
<div class="b" style="left:2246px;top:1050px;width:48px;height:48px;background:#37373e;border-radius:8px"></div>
<div class="b" style="left:2344px;top:1050px;width:48px;height:48px;background:#37373e;border-radius:8px"></div>
<div class="b" style="left:2408px;top:1050px;width:48px;height:48px;background:#37373e;border-radius:8px"></div>
<div class="b" style="left:2318px;top:1066px;width:2px;height:18px;background:#2a292f"></div>
<svg class="b" style="left:2246px;top:1051px" width="48" height="48" viewBox="0 0 48 48">
<path d="M13.95 21.2 A10.2 10.2 0 0 1 33.85 20.4 M34.05 24.8 A10.2 10.2 0 0 1 14.15 25.6" fill="none" stroke="#e4e4e8" stroke-width="2.2"/>
<path d="M13.4 24.2 L10.8 19.2 L16.6 19.9 Z M34.6 21.8 L37.2 26.8 L31.4 26.1 Z" fill="#e4e4e8"/></svg>
<svg class="b" style="left:2344px;top:1051px" width="48" height="48" viewBox="0 0 48 48">
<path d="M14.3 19.8 V32.8" stroke="#e4e4e8" stroke-width="2.2"/>
<path d="M18.1 31.4 V20 L24 12.8 a1.6 1.6 0 0 1 2.8 1.3 L25.9 19.3 H32.4 a1.2 1.2 0 0 1 1.1 1.6 L30.4 31.4 Z" fill="none" stroke="#e4e4e8" stroke-width="2.2" stroke-linejoin="round"/></svg>
<svg class="b" style="left:2408px;top:1051px" width="48" height="48" viewBox="0 0 48 48">
<path d="M33.6 13.4 V26.4" stroke="#e4e4e8" stroke-width="2.2"/>
<path d="M29.6 13.8 H18.2 a1.5 1.5 0 0 0 -1.4 1 L13.9 23.4 a1.3 1.3 0 0 0 1.2 1.8 H21.4 L20.6 30.6 a1.7 1.7 0 0 0 3 1.4 L29.6 25.4 Z" fill="none" stroke="#e4e4e8" stroke-width="2.2" stroke-linejoin="round"/></svg>
<div class="b" style="left:2230px;top:1156px;width:531px;height:135px;border-radius:14px;background:conic-gradient(from 0deg at 50% 50%,#5a7fd4 0deg,#6f8bd6 40deg,#cfd0d8 62deg,#e0e0e6 70deg,#e8925a 75deg,#9b52e2 81deg,#9b52e2 90deg,#e0906a 95deg,#d88a6a 101deg,#9b52e2 104deg,#d08868 109deg,#c58070 120deg,#4f76d0 127deg,#4a72cf 360deg)"></div>
<div class="b" style="left:2232px;top:1158px;width:527px;height:131px;border-radius:12px;background:#1a1b1f"></div>
<div class="t" style="left:2252px;top:1182.0px;font-size:26px;line-height:26px;color:#9a9ba1;font-weight:normal;font-family:'Liberation Sans', sans-serif;">你可以问我问题</div>
<svg class="b" style="left:2700px;top:1234px" width="40" height="40" viewBox="0 0 40 40">
<path d="M36 4 L3 19 L13 23 L30 10 L16 26 L16 34 L20 28 L31 33 Z" fill="#6b6d75"/></svg>
<svg class="b" style="left:2814px;top:1254px" width="30" height="32" viewBox="0 0 30 32">
<rect x="4" y="5" width="26" height="23" fill="none" stroke="#e8e8e8" stroke-width="2.4"/>
<path d="M4 16.5 h26" stroke="#e8e8e8" stroke-width="2.4"/></svg>
<div class="t" style="left:2541px;top:1285.5px;font-size:25px;line-height:25px;color:#f2f2f2;font-weight:normal;font-family:'Liberation Sans', sans-serif;text-shadow:0 0 2px #000">掘金技术社区 @ 雷震子</div>
<div class="b" style="left:2290px;top:82px;width:560px;height:551px;border-radius:12px;background:#33343c;border:1.5px solid #44454c;box-sizing:border-box;overflow:hidden;box-shadow:0 6px 18px rgba(0,0,0,0.5)">
<div class="b" style="left:0;top:0;width:100%;height:149px;background:#232429"></div>
<div class="b" style="left:0;top:302px;width:100%;height:2px;background:#3c3d44"></div>
<div class="b" style="left:0;top:455px;width:100%;height:2px;background:#3c3d44"></div>
</div>
<svg class="b" style="left:2323px;top:122px" width="72" height="72" viewBox="0 0 72 72">
<circle cx="36" cy="36" r="36" fill="#c992f2"/>
<circle cx="36" cy="26.5" r="7.5" fill="#a872cf"/>
<path d="M18 52 a18 14 0 0 1 36 0 z" fill="#21172a"/></svg>
<div class="t" style="left:2429px;top:143.0px;font-size:32px;line-height:32px;color:#ffffff;font-weight:bold;font-family:'Liberation Sans', sans-serif;-webkit-text-stroke:0.1px currentColor;">大牛在此</div>
<div class="t" style="left:2324px;top:267.0px;font-size:26px;line-height:26px;color:#ececec;font-weight:normal;font-family:'Liberation Sans', sans-serif;-webkit-text-stroke:0.7px currentColor;">主题</div>
<div class="t" style="left:2324px;top:328.0px;font-size:26px;line-height:26px;color:#ececec;font-weight:normal;font-family:'Liberation Sans', sans-serif;-webkit-text-stroke:0.7px currentColor;">语言</div>
<div class="t" style="left:2324px;top:422.0px;font-size:26px;line-height:26px;color:#ececec;font-weight:normal;font-family:'Liberation Sans', sans-serif;-webkit-text-stroke:0.7px currentColor;">主页</div>
<div class="t" style="left:2324px;top:482.0px;font-size:26px;line-height:26px;color:#ececec;font-weight:normal;font-family:'Liberation Sans', sans-serif;-webkit-text-stroke:0.7px currentColor;">工作台</div>
<div class="t" style="left:2324px;top:575.0px;font-size:26px;line-height:26px;color:#ececec;font-weight:normal;font-family:'Liberation Sans', sans-serif;-webkit-text-stroke:0.7px currentColor;">退出登录</div>
<div class="t" style="right:74px;top:268.0px;font-size:24px;line-height:24px;color:#a5a6ab;font-weight:normal;font-family:'Liberation Sans', sans-serif;-webkit-text-stroke:0.7px currentColor;">暗色</div>
<div class="t" style="right:74px;top:329.0px;font-size:24px;line-height:24px;color:#a5a6ab;font-weight:normal;font-family:'Liberation Sans', sans-serif;-webkit-text-stroke:0.7px currentColor;">简体中文</div>
<svg class="b" style="left:2788px;top:268px" width="20" height="20" viewBox="0 0 20 20">
<path d="M8 5.5 L12.5 10 L8 14.5" fill="none" stroke="#8f9096" stroke-width="2.8" stroke-linecap="round" stroke-linejoin="round"/></svg>
<svg class="b" style="left:2788px;top:329px" width="20" height="20" viewBox="0 0 20 20">
<path d="M8 5.5 L12.5 10 L8 14.5" fill="none" stroke="#8f9096" stroke-width="2.8" stroke-linecap="round" stroke-linejoin="round"/></svg>
<svg class="b" style="left:2782px;top:419px" width="28" height="28" viewBox="0 0 28 28">
<path d="M5.6 20 V23 H24 V20" fill="none" stroke="#85868c" stroke-width="2.2" stroke-linecap="round"/>
<path d="M6.7 18.6 C8 11.5 14 7.6 23.6 7 M19.4 2.8 L23.8 7 L19.6 11.2" fill="none" stroke="#85868c" stroke-width="2.2" stroke-linecap="round" stroke-linejoin="round"/></svg>
<svg class="b" style="left:2782px;top:479px" width="28" height="28" viewBox="0 0 28 28">
<path d="M5.6 20 V23 H24 V20" fill="none" stroke="#85868c" stroke-width="2.2" stroke-linecap="round"/>
<path d="M6.7 18.6 C8 11.5 14 7.6 23.6 7 M19.4 2.8 L23.8 7 L19.6 11.2" fill="none" stroke="#85868c" stroke-width="2.2" stroke-linecap="round" stroke-linejoin="round"/></svg>
<div class="b" style="left:0px;top:1314px;width:2836px;height:32px;background:#3a3c48"></div>
<svg class="b" style="left:50px;top:1323px" width="110" height="28" viewBox="0 0 110 28">
<circle cx="14" cy="14" r="12" fill="#a9aab1"/>
<path d="M9.5 9.5 l9 9 M18.5 9.5 l-9 9" stroke="#3a3c48" stroke-width="2.4"/>
<circle cx="71" cy="14" r="12" fill="#a9aab1"/>
<path d="M71 7.5 v8.5" stroke="#3a3c48" stroke-width="3" stroke-linecap="round"/>
<circle cx="71" cy="20.5" r="1.7" fill="#3a3c48"/></svg>
<div class="t" style="left:86px;top:1327.0px;font-size:26px;line-height:26px;color:#a9aab1;font-weight:normal;font-family:'Liberation Sans', sans-serif;">0</div>
<div class="t" style="left:143px;top:1327.0px;font-size:26px;line-height:26px;color:#a9aab1;font-weight:normal;font-family:'Liberation Sans', sans-serif;">0</div>
<div class="t" style="left:2256px;top:1326.0px;font-size:25px;line-height:25px;color:#a3a5ad;font-weight:normal;font-family:'Liberation Sans', sans-serif;">行 1，列 1</div>
<div class="t" style="left:2405px;top:1326.0px;font-size:25px;line-height:25px;color:#a3a5ad;font-weight:normal;font-family:'Liberation Sans', sans-serif;">空格: 2</div>
<div class="t" style="left:2514px;top:1326.0px;font-size:25px;line-height:25px;color:#a3a5ad;font-weight:normal;font-family:'Liberation Sans', sans-serif;">UTF-8</div>
<div class="t" style="left:2618px;top:1326.0px;font-size:25px;line-height:25px;color:#a3a5ad;font-weight:normal;font-family:'Liberation Sans', sans-serif;">LF</div>
<div class="t" style="left:2676px;top:1326.0px;font-size:25px;line-height:25px;color:#a3a5ad;font-weight:normal;font-family:'Liberation Sans', sans-serif;">{ }</div>
<div class="t" style="left:2714px;top:1326.0px;font-size:25px;line-height:25px;color:#a3a5ad;font-weight:normal;font-family:'Liberation Sans', sans-serif;">TypeScript</div>
</body></html>
